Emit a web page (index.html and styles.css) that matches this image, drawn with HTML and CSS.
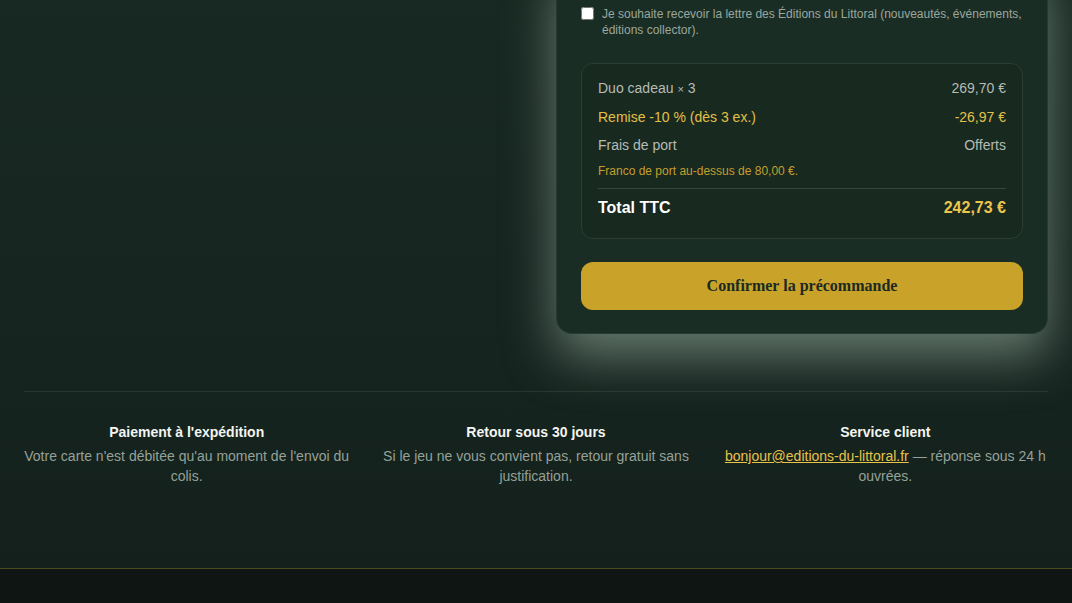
FILE: index.html
```html
<!DOCTYPE html>
<html lang="fr">
<head>
  <meta charset="UTF-8">
  <title>Précommande — Éditions du Littoral</title>
  <meta name="viewport" content="width=device-width, initial-scale=1.0">
  <link rel="stylesheet" href="styles.css">
</head>
<body>
  <main class="checkout">
    <div class="intro"></div>

    <form class="order-card">
      <label class="optin">
        <input type="checkbox">
        <span>Je souhaite recevoir la lettre des Éditions du Littoral (nouveautés, événements, éditions collector).</span>
      </label>

      <div class="summary">
        <div class="line"><span>Duo cadeau <small>×</small> 3</span><span>269,70 €</span></div>
        <div class="line discount"><span>Remise -10 % (dès 3 ex.)</span><span>-26,97 €</span></div>
        <div class="line"><span>Frais de port</span><span>Offerts</span></div>
        <p class="note">Franco de port au-dessus de 80,00 €.</p>
        <div class="line total"><span>Total TTC</span><span class="amount">242,73 €</span></div>
      </div>

      <button type="button" class="confirm">Confirmer la précommande</button>
    </form>
  </main>

  <section class="assurances">
    <div class="item">
      <h3>Paiement à l'expédition</h3>
      <p>Votre carte n'est débitée qu'au moment de l'envoi du colis.</p>
    </div>
    <div class="item">
      <h3>Retour sous 30 jours</h3>
      <p>Si le jeu ne vous convient pas, retour gratuit sans justification.</p>
    </div>
    <div class="item">
      <h3>Service client</h3>
      <p><a href="mailto:bonjour@editions-du-littoral.fr">bonjour@editions-du-littoral.fr</a> — réponse sous 24 h ouvrées.</p>
    </div>
  </section>

  <footer class="site-footer"></footer>
</body>
</html>
```

FILE: styles.css
```css
body {
  margin: 0;
  font-family: 'Liberation Sans', Arial, sans-serif;
  background: linear-gradient(180deg, #182822 0%, #16241f 60%, #13201b 100%);
  color: #e8ece6;
  overflow: hidden;
}
.checkout {
  display: grid;
  grid-template-columns: 1fr 492px;
  gap: 24px;
  padding: 0 24px;
  margin-top: -43px;
}
.order-card {
  background: #1a2d25;
  border: 1px solid rgba(255, 255, 255, 0.06);
  border-radius: 16px;
  padding: 48px 24px 23px;
  box-shadow: 0 22px 50px rgba(175, 200, 182, 0.52);
}
.optin {
  display: flex;
  gap: 8px;
  font-size: 12px;
  line-height: 16px;
  color: #9aa79e;
}
.optin input {
  width: 13px;
  height: 13px;
  margin: 1px 0 0 0;
  flex: none;
}
.summary {
  margin-top: 25px;
  border: 1px solid #2b3d35;
  border-radius: 12px;
  background: #182920;
  padding: 10px 16px 16px;
}
.line {
  display: flex;
  justify-content: space-between;
  font-size: 14px;
  line-height: 20px;
  padding: 4px 0;
  color: #b4bcb5;
}
.line small {
  font-size: 11px;
}
.discount {
  color: #e3c046;
}
.note {
  margin: 4px 0 9px;
  font-size: 12px;
  line-height: 16px;
  color: #c49f2e;
}
.total {
  border-top: 1px solid #34463d;
  padding-top: 9px;
  font-size: 16px;
  font-weight: bold;
  color: #ffffff;
}
.total .amount {
  color: #ecc54c;
}
.confirm {
  display: block;
  width: 100%;
  height: 48px;
  margin-top: 23px;
  border: none;
  border-radius: 12px;
  background: #c9a229;
  color: #1b2a22;
  font-family: 'Liberation Serif', 'Times New Roman', serif;
  font-weight: bold;
  font-size: 16px;
  cursor: pointer;
}
.assurances {
  display: grid;
  grid-template-columns: repeat(3, 1fr);
  gap: 24px;
  margin: 57px 24px 0;
  padding-top: 31px;
  border-top: 1px solid rgba(255, 255, 255, 0.08);
  text-align: center;
}
.item h3 {
  margin: 0 0 5px;
  font-size: 14px;
  line-height: 18px;
  color: #f4f5f0;
}
.item p {
  margin: 0;
  font-size: 14px;
  line-height: 20px;
  color: #95a198;
}
.item a {
  color: #e8c34a;
}
.site-footer {
  margin-top: 82px;
  height: 40px;
  border-top: 1px solid #4a4a1e;
  background: #0e1512;
}
```
